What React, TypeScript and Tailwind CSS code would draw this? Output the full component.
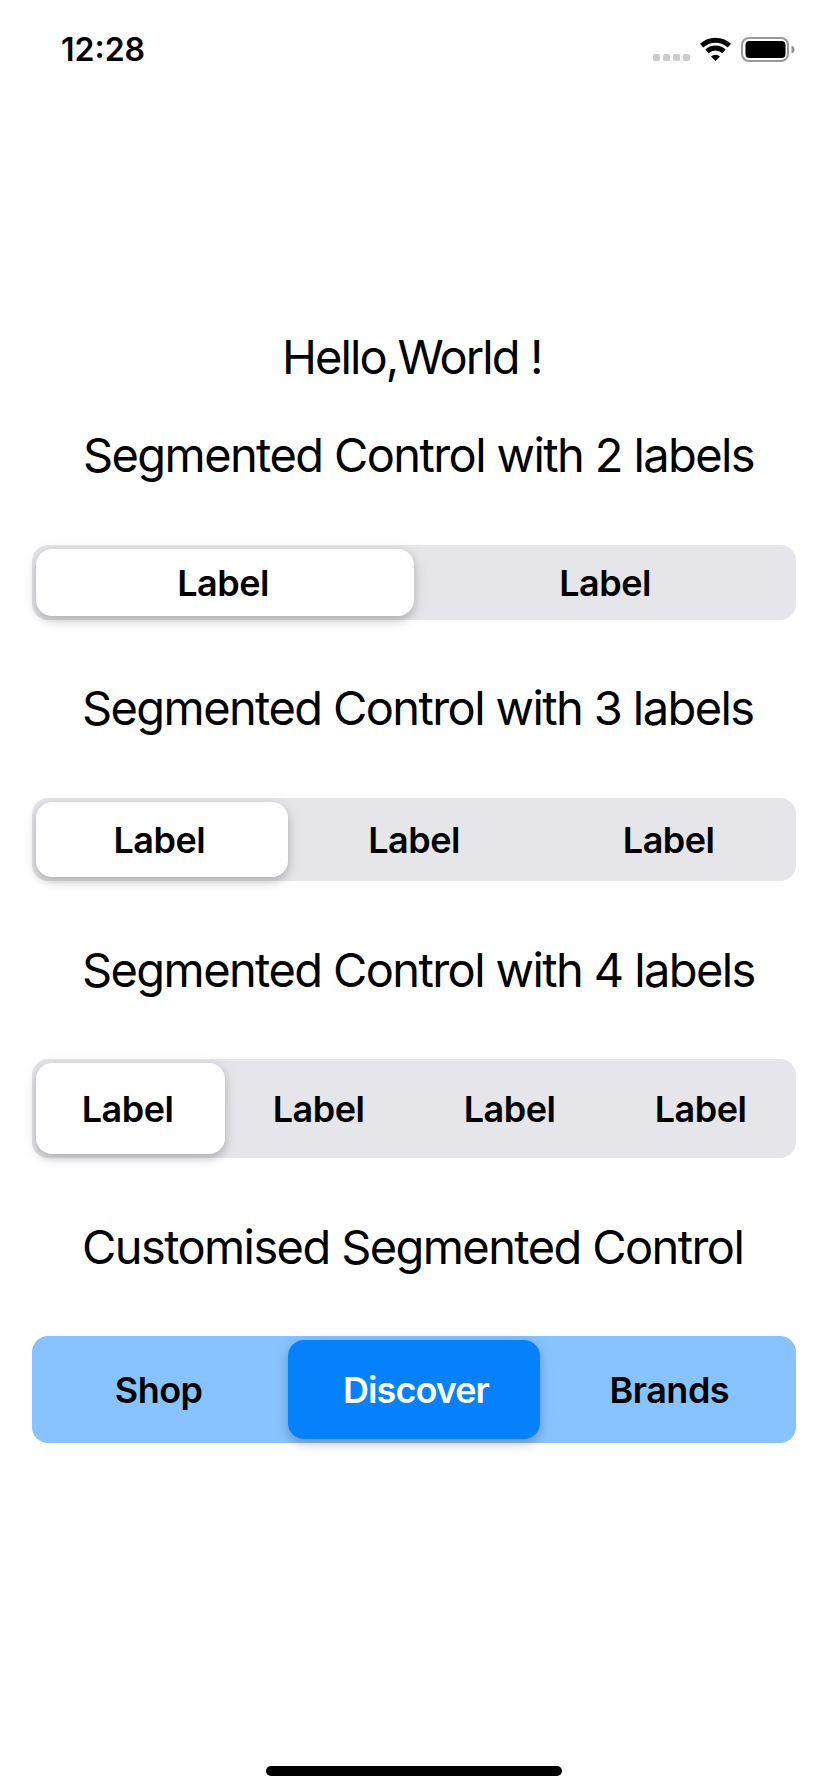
import { clsx } from "clsx";

type SegmentedControlProps = {
  labels: string[];
  selected: number;
  className: string;
  tone?: "gray" | "blue";
};

function SegmentedControl({ labels, selected, className, tone = "gray" }: SegmentedControlProps) {
  return (
    <div
      role="tablist"
      className={clsx("mx-8 grid rounded-[16px]", tone === "gray" ? "bg-[#e5e5ea]" : "bg-[#86c3ff]", className)}
    >
      <div className="col-start-1 row-start-1 flex p-1">
        {labels.map((_, i) => (
          <div
            key={i}
            className={clsx(
              "flex-1 rounded-[16px]",
              i === selected && "shadow-[0_5px_8px_rgba(0,0,0,0.16),0_2px_16px_rgba(0,0,0,0.10)]",
              i === selected && tone === "gray" && "bg-white",
              i === selected && tone === "blue" && "bg-[#0582fb]"
            )}
          />
        ))}
      </div>
      <div className="z-10 col-start-1 row-start-1 flex">
        {labels.map((label, i) => (
          <button
            key={i}
            role="tab"
            aria-selected={i === selected}
            className={clsx(
              "flex-1 text-center text-[36px] leading-[44px] font-semibold",
              i === selected && tone === "blue" ? "pl-1 tracking-[-0.95px] text-white" : "tracking-[-0.5px]"
            )}
          >
            {label}
          </button>
        ))}
      </div>
    </div>
  );
}

function StatusBar() {
  return (
    <header className="flex h-[100px] items-start justify-between pr-[33px] pl-[61px]">
      <div className="pt-[30px] text-[32px] leading-10 font-semibold">12:28</div>
      <div className="flex pt-[36px]">
        <svg width="38" height="28" className="mr-[9px]" fill="#cbcbcb">
          <rect x="0" y="18" width="7" height="7" rx="2" />
          <rect x="10" y="18" width="7" height="7" rx="2" />
          <rect x="20" y="18" width="7" height="7" rx="2" />
          <rect x="30" y="18" width="7" height="7" rx="2" />
        </svg>
        <svg width="32" height="28" className="mr-[9px]" fill="none" stroke="#000" strokeWidth="5">
          <path d="M1.6 9.6 A20.5 20.5 0 0 1 29.4 9.6" />
          <path d="M7 15.4 A12.4 12.4 0 0 1 24 15.4" />
          <path d="M15.5 25 L11 20.4 A6.6 6.6 0 0 1 20 20.4 Z" fill="#000" stroke="none" />
        </svg>
        <svg width="54" height="28">
          <rect x="1" y="2" width="46" height="23" rx="7" fill="none" stroke="#999" strokeWidth="2" />
          <rect x="4.5" y="5" width="40" height="17" rx="4" />
          <path d="M50.5 9.5 Q53.5 10.5 53.5 13.5 Q53.5 16.5 50.5 17.5 Z" fill="#8f8f8f" />
        </svg>
      </div>
    </header>
  );
}

const heading = "h-[60px] text-[47px] leading-[60px] whitespace-nowrap";

export default function App() {
  return (
    <div className="flex h-[1792px] w-[828px] flex-col bg-white font-['Inter',sans-serif] text-black">
      <StatusBar />
      <main className="flex flex-1 flex-col pt-[227px]">
        <h1 className={clsx(heading, "pl-[282px] tracking-[-1.9px]")}>Hello,World !</h1>
        <h2 className={clsx(heading, "mt-[38px] pl-[83px] tracking-[-1.6px]")}>Segmented Control with 2 labels</h2>
        <SegmentedControl className="mt-[60px] h-[75px]" labels={["Label", "Label"]} selected={0} />
        <h2 className={clsx(heading, "mt-[58px] pl-[82px] tracking-[-1.6px]")}>Segmented Control with 3 labels</h2>
        <SegmentedControl className="mt-[60px] h-[83px]" labels={["Label", "Label", "Label"]} selected={0} />
        <h2 className={clsx(heading, "mt-[59px] pl-[82px] tracking-[-1.6px]")}>Segmented Control with 4 labels</h2>
        <SegmentedControl className="mt-[59px] h-[99px]" labels={["Label", "Label", "Label", "Label"]} selected={0} />
        <h2 className={clsx(heading, "mt-[59px] pl-[82px] tracking-[-1.6px]")}>Customised Segmented Control</h2>
        <SegmentedControl className="mt-[59px] h-[107px]" labels={["Shop", "Discover", "Brands"]} selected={1} tone="blue" />
      </main>
      <footer className="flex justify-center pb-4">
        <div className="h-[10px] w-[296px] rounded-full bg-black" />
      </footer>
    </div>
  );
}
